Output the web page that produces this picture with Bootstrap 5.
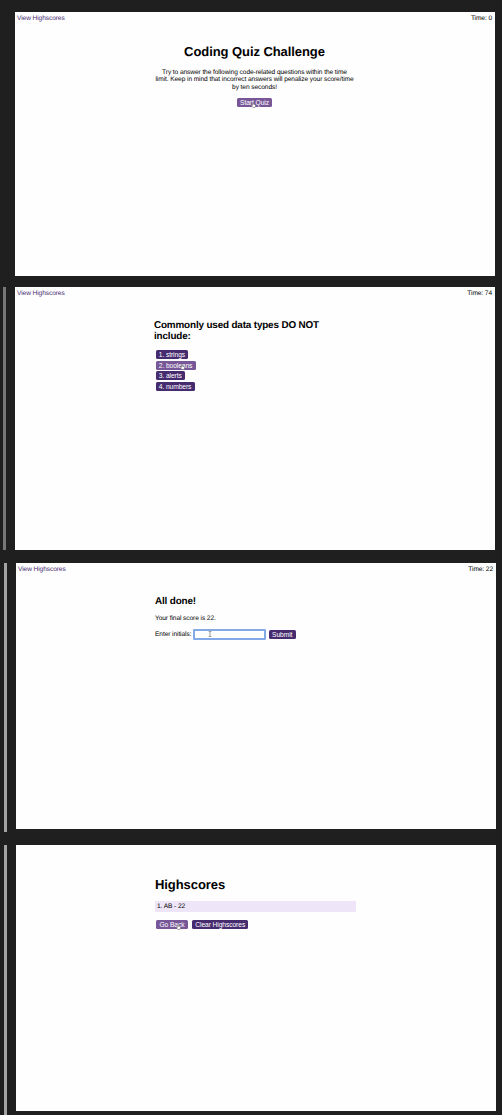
<!DOCTYPE html>
<html lang="en">
<head>
<meta charset="utf-8">
<title>Coding Quiz Challenge</title>
<link href="https://cdn.jsdelivr.net/npm/bootstrap@5.3.0/dist/css/bootstrap.min.css" rel="stylesheet">
<style>
body{background:#1f1f1f;color:#000;font:6.6px/7.4px "Liberation Sans",Arial,sans-serif;letter-spacing:-.09px;width:502px;height:1115px;overflow:hidden;text-rendering:geometricPrecision}
.shot{padding:0 7px 0 3px}
.shift{padding:0 6px 0 4px}
.rail{width:3px;margin-right:9px}
.screen{width:480px;background:#fefefe}
.topline{padding:3px 3px 0 2px;height:10px}
.topline a{color:#4a2a72}
.quiz{width:201px;margin-left:139px}
h1{font-size:13px;line-height:15px;font-weight:700;margin:0;letter-spacing:-.07px}
h2{font-size:9.9px;line-height:11px;font-weight:700;margin:0;letter-spacing:-.15px}
p{margin:0}
.quiz-btn{--bs-btn-color:#fff;--bs-btn-bg:#472b6f;--bs-btn-border-color:#472b6f;--bs-btn-font-size:6.7px;--bs-btn-line-height:9px;--bs-btn-padding-x:3.2px;--bs-btn-padding-y:0;--bs-btn-border-width:0;--bs-btn-border-radius:1.5px;height:9px;letter-spacing:-.09px;white-space:nowrap}
.hovered{--bs-btn-bg:#775797}
.choices{gap:1.7px;margin:8px 0 0 1.6px}
.cursor{width:5px;height:6px;left:50%;top:50%}
.initials{width:73px;height:11px;border:2px solid #82aae6;border-radius:1px;background:#fff;margin:0 3px 0 1.5px;padding:0}
.score{background:#eee6f8;height:11px;padding:2px 2px 0;margin-top:9px}
</style>
<script src="https://cdn.jsdelivr.net/npm/bootstrap@5.3.0/dist/js/bootstrap.bundle.min.js"></script>
</head>
<body>
<svg width="0" height="0" class="d-none"><defs><g id="hand"><path d="M1.5 3.4V.8q.5-.6 1 0v1.5l1.7.4q.5.3.3 1L4 5.5H1.7L.4 3.4q.3-.6 1.1 0z" fill="#fff" stroke="#555" stroke-width=".45"/></g></defs></svg>

<section class="shot d-flex" style="padding-top:12px">
  <div class="rail"></div>
  <div class="screen" style="height:264px">
    <nav class="topline d-flex justify-content-between"><a class="text-decoration-none" href="#">View Highscores</a><span>Time: 0</span></nav>
    <div class="quiz text-center" style="padding-top:22px">
      <h1>Coding Quiz Challenge</h1>
      <p style="margin-top:9.7px">Try to answer the following code-related questions within the time<br>limit. Keep in mind that incorrect answers will penalize your score/time<br>by ten seconds!</p>
      <div class="d-flex justify-content-center" style="margin-top:7px"><button class="btn quiz-btn hovered position-relative">Start Quiz<svg class="cursor position-absolute" style="margin-left:-4px" viewBox="0 0 5 6"><use href="#hand"/></svg></button></div>
    </div>
  </div>
</section>

<section class="shot d-flex" style="padding-top:11px">
  <div class="rail" style="background:#777"></div>
  <div class="screen" style="height:263px">
    <nav class="topline d-flex justify-content-between"><a class="text-decoration-none" href="#">View Highscores</a><span>Time: 74</span></nav>
    <div class="quiz" style="padding-top:23px">
      <h2>Commonly used data types DO NOT<br>include:</h2>
      <div class="choices d-flex flex-column align-items-start">
        <button class="btn quiz-btn">1. strings</button>
        <button class="btn quiz-btn hovered position-relative">2. booleans<svg class="cursor position-absolute" style="margin-left:4px;margin-top:-1px" viewBox="0 0 5 6"><use href="#hand"/></svg></button>
        <button class="btn quiz-btn">3. alerts</button>
        <button class="btn quiz-btn">4. numbers</button>
      </div>
    </div>
  </div>
</section>

<section class="shot shift d-flex" style="padding-top:13px">
  <div class="rail" style="background:#a3a3a3;height:269px"></div>
  <div class="screen" style="height:266px">
    <nav class="topline d-flex justify-content-between"><a class="text-decoration-none" href="#">View Highscores</a><span>Time: 22</span></nav>
    <div class="quiz" style="padding-top:23px">
      <h2>All done!</h2>
      <p style="margin-top:8px">Your final score is 22.</p>
      <div class="d-flex align-items-center" style="margin-top:6.6px"><label>Enter initials:</label><div class="initials position-relative"><svg class="position-absolute" style="left:13px;top:0" width="4" height="6" viewBox="0 0 4 6"><path d="M.7.5h1l.3.4.3-.4h1M2 .8v4.4M.7 5.5h1l.3-.4.3.4h1" fill="none" stroke="#555" stroke-width=".6"/></svg></div><button class="btn quiz-btn">Submit</button></div>
    </div>
  </div>
</section>

<section class="shot shift d-flex" style="padding-top:13px">
  <div class="rail" style="background:#a3a3a3;height:270px"></div>
  <div class="screen" style="height:266px">
    <div class="quiz" style="padding-top:32px">
      <h1>Highscores</h1>
      <div class="score">1. AB - 22</div>
      <div class="d-flex" style="gap:4.5px;margin:8px 0 0 1.2px">
        <button class="btn quiz-btn hovered position-relative">Go Back<svg class="cursor position-absolute" style="margin-left:4px;margin-top:-1px" viewBox="0 0 5 6"><use href="#hand"/></svg></button>
        <button class="btn quiz-btn">Clear Highscores</button>
      </div>
    </div>
  </div>
</section>
</body>
</html>
